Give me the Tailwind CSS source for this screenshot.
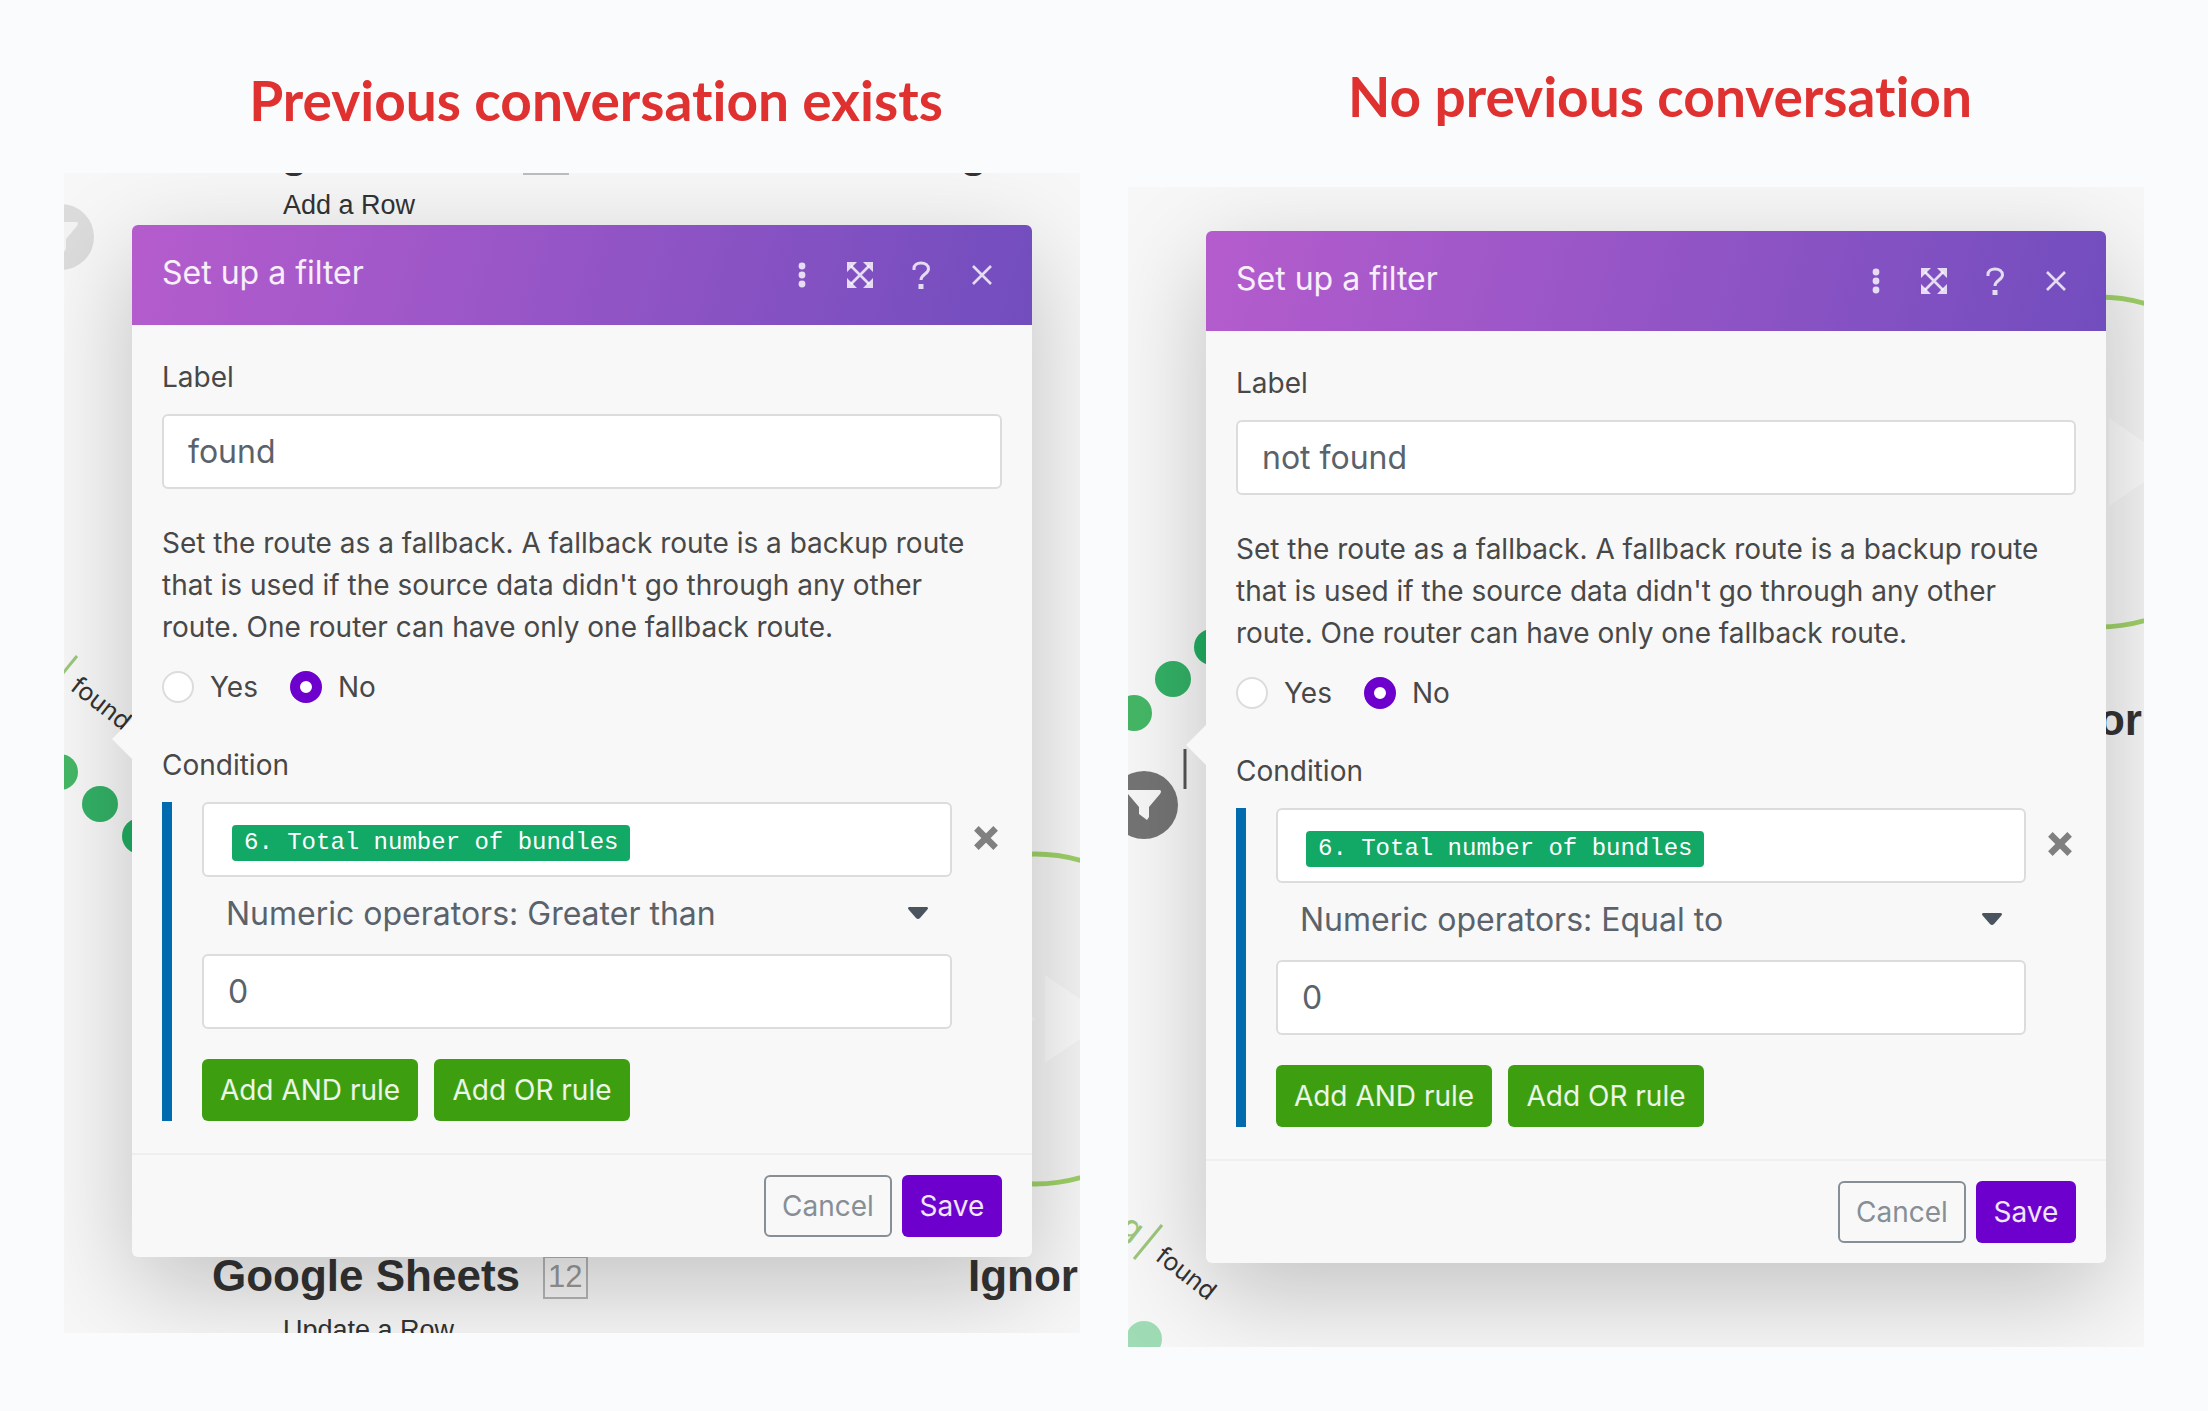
<!DOCTYPE html>
<html lang="en">
<head>
    <meta charset="UTF-8">
    <meta name="viewport" content="width=device-width, initial-scale=1.0">
    <title>Router filters</title>
    <script src="https://cdn.jsdelivr.net/npm/@tailwindcss/browser@4"></script>
</head>
<body class="bg-[#f9fbfd] min-h-screen font-['Inter',sans-serif] text-[#484848]">
    <!-- shared icons -->
    <svg class="hidden">
        <symbol id="dots" viewBox="0 0 28 28">
            <circle cx="16" cy="5" r="3.4"/><circle cx="16" cy="14" r="3.4"/><circle cx="16" cy="23" r="3.4"/>
        </symbol>
        <symbol id="expand" viewBox="0 0 28 28">
            <path d="M5 5 23 23M23 5 5 23" stroke="currentColor" stroke-width="2.6"/>
            <path d="M1 1h10l-3 3-4 4-3 3zM27 1v10l-3-3-4-4-3-3zM1 27V17l3 3 4 4 3 3zM27 27H17l3-3 4-4 3-3z"/>
        </symbol>
        <symbol id="help" viewBox="0 0 28 28">
            <path d="M7 9V7.500C7 4 10 2 14 2s7.500 2.200 7.500 6c0 5-7.500 5-7.500 11" fill="none" stroke="currentColor" stroke-width="3"/>
            <path d="M11.500 23h5v5h-5z"/>
        </symbol>
        <symbol id="close" viewBox="0 0 28 28">
            <path d="M5 5 23 23M23 5 5 23" stroke="currentColor" stroke-width="2.600"/>
        </symbol>
        <symbol id="remove" viewBox="0 0 28 28">
            <path d="M5 5 23 23M23 5 5 23" stroke="currentColor" stroke-width="6"/>
        </symbol>
        <symbol id="caret" viewBox="0 0 20 12">
            <path d="M1 0h18q2 1 0 3l-7 8q-2 2-4 0L1 3q-2-2 0-3z"/>
        </symbol>
        <symbol id="funnel" viewBox="0 0 34 30">
            <path d="M1 0h32q2 1 0 4L22 17v10l-2 3-8-6v-7L1 4q-2-3 0-4z"/>
        </symbol>
        <radialGradient id="shade">
            <stop offset="0" stop-color="#000" stop-opacity=".2"/>
            <stop offset="1" stop-color="#000" stop-opacity="0"/>
        </radialGradient>
    </svg>

    <main class="flex items-start gap-12 px-16">
        <section class="flex-1 min-w-0">
            <h1 class="pt-[68px] pb-[41px] pl-12 text-center text-[55px] leading-[64px] font-bold text-[#e03131] font-['Excalifont','Lato',sans-serif] [font-variant-ligatures:none]">Previous conversation exists</h1>

            <div class="relative overflow-hidden bg-[#f7f7f7] pt-[52px] pb-[76px] pl-[68px] pr-12">
                <!-- scenario canvas behind the dialog -->
                <svg class="absolute inset-0 w-full h-full" font-family="Liberation Sans, Arial, sans-serif" fill="#333">
                    <text x="129" y="-6" font-size="44" font-weight="bold">Google Sheets</text>
                    <rect x="460" y="-40" width="44" height="41" fill="none" stroke="#bdbdbd" stroke-width="2"/>
                    <text x="884" y="-6" font-size="44" font-weight="bold">Ignor</text>
                    <text x="219" y="41" font-size="27">Add a Row</text>
                    <circle cx="-3" cy="64" r="33" fill="#dcdcdc"/>
                    <use href="#funnel" x="-20" y="49" width="34" height="30" fill="#f3f3f3"/>
                    <path d="M-15 517 13 483" stroke="#9cc77c" stroke-width="3"/>
                    <text transform="translate(5 516) rotate(38)" font-size="25" font-family="Inter, sans-serif">found</text>
                    <circle cx="-4" cy="599" r="18" fill="#45b766"/>
                    <circle cx="36" cy="631" r="18" fill="#33b166"/>
                    <circle cx="76" cy="663" r="18" fill="#22ae63"/>
                    <ellipse cx="976" cy="1032" rx="170" ry="60" fill="url(#shade)"/>
                    <circle cx="971" cy="846" r="165" fill="#f4f4f4" stroke="#9ed067" stroke-width="5"/>
                    <path d="M908 802 972 846 908 890zM981 802 1045 846 981 890z" fill="#fff" fill-opacity=".5"/>
                    <text x="148" y="1118" font-size="44" font-weight="bold">Google Sheets</text>
                    <rect x="480" y="1084" width="43" height="41" fill="none" stroke="#b5b5b5" stroke-width="2"/>
                    <text x="484" y="1114" font-size="31" fill="#999">12</text>
                    <text x="904" y="1118" font-size="44" font-weight="bold">Ignor</text>
                    <text x="219" y="1166" font-size="27">Update a Row</text>
                </svg>

                <form class="relative rounded-md bg-[#f8f8f8] shadow-[0_30px_100px_rgba(0,0,0,0.22)]">
                    <div class="absolute top-[494px] -left-5 w-5 h-10 bg-[#f8f8f8] [clip-path:polygon(0_50%,100%_0,100%_100%)]"></div>
                    <header class="flex items-center h-[100px] pl-[30px] pr-9 rounded-t-md bg-linear-[105deg,#b55ccd,#724dbe] text-white/90">
                        <h2 class="flex-1 text-[32px] leading-10 pb-1">Set up a filter</h2>
                        <div class="flex items-center gap-8 text-white/80">
                            <button type="button" aria-label="More" class="w-7 h-7"><svg class="w-7 h-7 fill-current"><use href="#dots"/></svg></button>
                            <button type="button" aria-label="Expand" class="w-7 h-7"><svg class="w-7 h-7 fill-current"><use href="#expand"/></svg></button>
                            <button type="button" aria-label="Help" class="w-[30px] h-7"><svg class="w-[30px] h-7 fill-current"><use href="#help"/></svg></button>
                            <button type="button" aria-label="Close" class="w-7 h-7"><svg class="w-7 h-7 fill-current"><use href="#close"/></svg></button>
                        </div>
                    </header>

                    <div class="px-[30px] pt-[31px] pb-8 text-[28px] leading-[42px]">
                        <label for="label-a" class="block mb-4">Label</label>
                        <input id="label-a" type="text" value="found" class="block w-full h-[75px] px-6 border-2 border-[#dcdcdc] rounded-md bg-white text-[32px] text-[#5a626b]">

                        <fieldset class="mt-[33px]">
                            <legend>Set the route as a fallback. A fallback route is a backup route that is used if the source data didn't go through any other route. One router can have only one fallback route.</legend>
                            <div class="flex gap-8 mt-[18px]">
                                <label class="flex items-center gap-4"><input type="radio" name="fallback-a" class="appearance-none w-8 h-8 rounded-full bg-white border-2 border-[#dcdcdc] checked:border-[10px] checked:border-[#6d00cc]">Yes</label>
                                <label class="flex items-center gap-4"><input type="radio" name="fallback-a" checked class="appearance-none w-8 h-8 rounded-full bg-white border-2 border-[#dcdcdc] checked:border-[10px] checked:border-[#6d00cc]">No</label>
                            </div>
                        </fieldset>

                        <p class="mt-9 mb-4">Condition</p>
                        <div class="flex border-l-[10px] border-[#006bae] pl-[30px]">
                            <div class="flex-1 text-[32px] text-[#5a626b]">
                                <div class="flex items-center h-[75px] px-7 pt-1.5 border-2 border-[#dcdcdc] rounded-md bg-white">
                                    <span class="px-3 rounded bg-[#12a866] text-white text-[24px] leading-9 font-['Liberation_Mono',monospace]">6. Total number of bundles</span>
                                </div>
                                <div class="relative">
                                    <select aria-label="Operator" class="appearance-none block w-full h-[77px] px-6 pb-1">
                                        <option>Numeric operators: Greater than</option>
                                    </select>
                                    <svg class="absolute right-6 top-[30px] w-5 h-3 fill-[#4a545e] pointer-events-none"><use href="#caret"/></svg>
                                </div>
                                <input type="text" aria-label="Value" value="0" class="block w-full h-[75px] px-6 border-2 border-[#dcdcdc] rounded-md bg-white">
                                <div class="flex gap-4 mt-[30px] text-[28px] text-white/90">
                                    <button type="button" class="w-[216px] h-[62px] rounded-md bg-[#3d9f10]">Add AND rule</button>
                                    <button type="button" class="w-[196px] h-[62px] rounded-md bg-[#3d9f10]">Add OR rule</button>
                                </div>
                            </div>
                            <button type="button" aria-label="Remove rule" class="w-[50px] h-[71px] pl-[19px]"><svg class="w-[30px] h-[30px] text-[#808080]"><use href="#remove"/></svg></button>
                        </div>
                    </div>

                    <footer class="flex justify-end gap-[10px] px-[30px] py-5 border-t-2 border-[#efefef] text-[28px]">
                        <button type="button" class="w-32 h-[62px] border-2 border-[#868e96] rounded-md text-[#868e96]">Cancel</button>
                        <button type="button" class="w-[100px] h-[62px] rounded-md bg-[#6d00cc] text-white/90">Save</button>
                    </footer>
                </form>
            </div>
        </section>

        <section class="flex-1 min-w-0">
            <h1 class="pt-16 pb-[59px] pl-12 text-center text-[55px] leading-[64px] font-bold text-[#e03131] font-['Excalifont','Lato',sans-serif] [font-variant-ligatures:none]">No previous conversation</h1>

            <div class="relative overflow-hidden bg-[#f7f7f7] pt-11 pb-[84px] pl-[78px] pr-[38px]">
                <svg class="absolute inset-0 w-full h-full" font-family="Liberation Sans, Arial, sans-serif" fill="#333">
                    <circle cx="84" cy="460" r="18" fill="#22ae63"/>
                    <circle cx="45" cy="492" r="18" fill="#33b166"/>
                    <circle cx="6" cy="526" r="18" fill="#45b766"/>
                    <circle cx="16" cy="618" r="34" fill="#747474"/>
                    <use href="#funnel" x="-1" y="603" width="34" height="30" fill="#f7f7f7"/>
                    <path d="M57 562v40" stroke="#555" stroke-width="3"/>
                    <ellipse cx="976" cy="461" rx="170" ry="60" fill="url(#shade)"/>
                    <circle cx="971" cy="275" r="165" fill="#f4f4f4" stroke="#9ed067" stroke-width="5"/>
                    <path d="M981 231 1045 275 981 319z" fill="#fff" fill-opacity=".5"/>
                    <text x="904" y="548" font-size="44" font-weight="bold">Ignor</text>
                    <text transform="translate(-10 1043) rotate(38)" font-size="32" font-weight="500" font-family="Inter, sans-serif" fill="#9cc77c">g</text>
                    <path d="M6 1072 34 1038" stroke="#9cc77c" stroke-width="3"/>
                    <text transform="translate(26 1072) rotate(38)" font-size="25" font-family="Inter, sans-serif">found</text>
                    <circle cx="16" cy="1152" r="18" fill="#9fdcb5"/>
                </svg>

                <form class="relative rounded-md bg-[#f8f8f8] shadow-[0_30px_100px_rgba(0,0,0,0.22)]">
                    <div class="absolute top-[494px] -left-5 w-5 h-10 bg-[#f8f8f8] [clip-path:polygon(0_50%,100%_0,100%_100%)]"></div>
                    <header class="flex items-center h-[100px] pl-[30px] pr-9 rounded-t-md bg-linear-[105deg,#b55ccd,#724dbe] text-white/90">
                        <h2 class="flex-1 text-[32px] leading-10 pb-1">Set up a filter</h2>
                        <div class="flex items-center gap-8 text-white/80">
                            <button type="button" aria-label="More" class="w-7 h-7"><svg class="w-7 h-7 fill-current"><use href="#dots"/></svg></button>
                            <button type="button" aria-label="Expand" class="w-7 h-7"><svg class="w-7 h-7 fill-current"><use href="#expand"/></svg></button>
                            <button type="button" aria-label="Help" class="w-[30px] h-7"><svg class="w-[30px] h-7 fill-current"><use href="#help"/></svg></button>
                            <button type="button" aria-label="Close" class="w-7 h-7"><svg class="w-7 h-7 fill-current"><use href="#close"/></svg></button>
                        </div>
                    </header>

                    <div class="px-[30px] pt-[31px] pb-8 text-[28px] leading-[42px]">
                        <label for="label-b" class="block mb-4">Label</label>
                        <input id="label-b" type="text" value="not found" class="block w-full h-[75px] px-6 border-2 border-[#dcdcdc] rounded-md bg-white text-[32px] text-[#5a626b]">

                        <fieldset class="mt-[33px]">
                            <legend>Set the route as a fallback. A fallback route is a backup route that is used if the source data didn't go through any other route. One router can have only one fallback route.</legend>
                            <div class="flex gap-8 mt-[18px]">
                                <label class="flex items-center gap-4"><input type="radio" name="fallback-b" class="appearance-none w-8 h-8 rounded-full bg-white border-2 border-[#dcdcdc] checked:border-[10px] checked:border-[#6d00cc]">Yes</label>
                                <label class="flex items-center gap-4"><input type="radio" name="fallback-b" checked class="appearance-none w-8 h-8 rounded-full bg-white border-2 border-[#dcdcdc] checked:border-[10px] checked:border-[#6d00cc]">No</label>
                            </div>
                        </fieldset>

                        <p class="mt-9 mb-4">Condition</p>
                        <div class="flex border-l-[10px] border-[#006bae] pl-[30px]">
                            <div class="flex-1 text-[32px] text-[#5a626b]">
                                <div class="flex items-center h-[75px] px-7 pt-1.5 border-2 border-[#dcdcdc] rounded-md bg-white">
                                    <span class="px-3 rounded bg-[#12a866] text-white text-[24px] leading-9 font-['Liberation_Mono',monospace]">6. Total number of bundles</span>
                                </div>
                                <div class="relative">
                                    <select aria-label="Operator" class="appearance-none block w-full h-[77px] px-6 pb-1">
                                        <option>Numeric operators: Equal to</option>
                                    </select>
                                    <svg class="absolute right-6 top-[30px] w-5 h-3 fill-[#4a545e] pointer-events-none"><use href="#caret"/></svg>
                                </div>
                                <input type="text" aria-label="Value" value="0" class="block w-full h-[75px] px-6 border-2 border-[#dcdcdc] rounded-md bg-white">
                                <div class="flex gap-4 mt-[30px] text-[28px] text-white/90">
                                    <button type="button" class="w-[216px] h-[62px] rounded-md bg-[#3d9f10]">Add AND rule</button>
                                    <button type="button" class="w-[196px] h-[62px] rounded-md bg-[#3d9f10]">Add OR rule</button>
                                </div>
                            </div>
                            <button type="button" aria-label="Remove rule" class="w-[50px] h-[71px] pl-[19px]"><svg class="w-[30px] h-[30px] text-[#808080]"><use href="#remove"/></svg></button>
                        </div>
                    </div>

                    <footer class="flex justify-end gap-[10px] px-[30px] py-5 border-t-2 border-[#efefef] text-[28px]">
                        <button type="button" class="w-32 h-[62px] border-2 border-[#868e96] rounded-md text-[#868e96]">Cancel</button>
                        <button type="button" class="w-[100px] h-[62px] rounded-md bg-[#6d00cc] text-white/90">Save</button>
                    </footer>
                </form>
            </div>
        </section>
    </main>
</body>
</html>
